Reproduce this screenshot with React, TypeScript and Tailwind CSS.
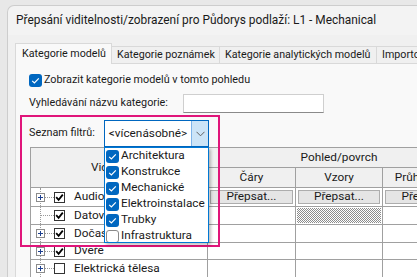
import React from "react";

function BlueCheck({ checked }: { checked: boolean }) {
  if (!checked)
    return <div className="w-[13px] h-[13px] rounded-[3px] border border-[#8a8a8a] bg-white shrink-0" />;
  return (
    <div className="w-[13px] h-[13px] rounded-[3px] bg-[#0067c0] shrink-0 flex items-center justify-center">
      <svg width="13" height="13" viewBox="0 0 13 13">
        <path d="M3.2 6.8 L5.4 9 L9.8 4.4" stroke="#ffffff" strokeWidth="1.2" fill="none" />
      </svg>
    </div>
  );
}

function ClassicCheck({ checked }: { checked: boolean }) {
  return (
    <div className="w-[11px] h-[11px] border border-[#333333] bg-white shrink-0 flex items-center justify-center">
      {checked && (
        <svg width="9" height="9" viewBox="0 0 9 9">
          <path d="M1.2 4.2 L3.6 6.8 L7.8 1.6" stroke="#000000" strokeWidth="1.8" fill="none" />
        </svg>
      )}
    </div>
  );
}

function Expander() {
  return (
    <div className="w-[9px] h-[9px] border border-[#8c8c8c] bg-white shrink-0 flex items-center justify-center z-10">
      <svg width="7" height="7" viewBox="0 0 7 7">
        <path d="M1 3.5 H6 M3.5 1 V6" stroke="#1c3f8f" strokeWidth="1" fill="none" />
      </svg>
    </div>
  );
}

const rows = [
  { name: "Audiovizuální zařízení", exp: true, checked: true, h: "h-[19px]", sel: true },
  { name: "Datová zařízení", exp: false, checked: true, h: "h-[18px]", hatch: true },
  { name: "Dočasné konstrukce", exp: true, checked: true, h: "h-[18px]" },
  { name: "Dveře", exp: true, checked: true, h: "h-[17px]" },
  { name: "Elektrická tělesa", exp: true, checked: false, h: "h-[18px]" },
];

const listItems = [
  ["Architektura", true],
  ["Konstrukce", true],
  ["Mechanické", true],
  ["Elektroinstalace", true],
  ["Trubky", true],
  ["Infrastruktura", false],
] as const;

function Btn() {
  return (
    <div className="h-full p-[2px]">
      <div className="h-full bg-[#e5e5e5] border border-[#adadad] flex items-center justify-center">
        Přepsat...
      </div>
    </div>
  );
}

export default function App() {
  return (
    <div className="relative w-[417px] h-[277px] overflow-hidden bg-[#e8e8e8] pt-[5px] pl-[7px] text-[#1a1a1a] font-['Roboto','Noto_Sans',sans-serif]">
      <div className="flex flex-col h-[272px] w-[410px] rounded-tl-[7px] border-l border-t border-[#cdcdcd] bg-[#f3f3f3] overflow-hidden">
        <div className="h-[29px] shrink-0 flex items-center pl-[8px] text-[11.9px] whitespace-nowrap">
          Přepsání viditelnosti/zobrazení pro Půdorys podlaží: L1 - Mechanical
        </div>
        <div className="flex-1 flex flex-col bg-[#f0f0f0] pl-[7px] pt-[8px] overflow-hidden">
          <div className="flex items-end h-[21px] shrink-0 text-[10.7px] whitespace-nowrap">
            <div className="h-[21px] w-[97px] shrink-0 border border-b-0 border-[#d9d9d9] bg-[#f9f9f9] pl-[6px] flex items-center overflow-hidden">
              Kategorie modelů
            </div>
            <div className="h-[18px] w-[108px] shrink-0 border-t border-r border-b border-[#d9d9d9] bg-[#f0f0f0] pl-[5px] flex items-center overflow-hidden">
              Kategorie poznámek
            </div>
            <div className="h-[18px] w-[157px] shrink-0 border-t border-r border-b border-[#d9d9d9] bg-[#f0f0f0] pl-[5px] flex items-center overflow-hidden">
              Kategorie analytických modelů
            </div>
            <div className="h-[18px] w-[80px] shrink-0 border-t border-r border-b border-[#d9d9d9] bg-[#f0f0f0] pl-[5px] flex items-center overflow-hidden">
              Importované kategorie
            </div>
          </div>
          <div className="flex-1 bg-[#f9f9f9] border-l border-[#d9d9d9] text-[10.8px] overflow-hidden">
            <div className="mt-[10px] h-[13px] pl-[13px] flex items-center gap-[2px] whitespace-nowrap">
              <BlueCheck checked />
              <span>Zobrazit kategorie modelů v tomto pohledu</span>
            </div>
            <div className="mt-[7px] h-[19px] pl-[13px] flex items-center whitespace-nowrap">
              <span className="w-[154px] shrink-0">Vyhledávání názvu kategorie:</span>
              <div className="w-[141px] h-[19px] bg-white border border-[#cfcfcf] border-b-[#8a8a8a]" />
            </div>
            <div className="mt-[7px] h-[27px] pl-[13px] flex items-center whitespace-nowrap">
              <span className="w-[75px] shrink-0">Seznam filtrů:</span>
              <div className="w-[105px] h-[27px] flex border border-[#0067c0] bg-white">
                <div className="flex-1 flex items-center justify-center text-[11.8px]">&lt;vícenásobné&gt;</div>
                <div className="w-[17px] bg-[#cce4f7] border-l border-[#7eb4ea] flex items-center justify-center">
                  <svg width="9" height="6" viewBox="0 0 9 6">
                    <path d="M0.5 0.8 L4.5 4.8 L8.5 0.8" stroke="#606060" strokeWidth="1" fill="none" />
                  </svg>
                </div>
              </div>
            </div>
            <div className="ml-[14px] w-max grid grid-cols-[177px_88px_87px_88px] border-l border-t border-[#a0a0a0] whitespace-nowrap text-[11.8px]">
              <div className="row-span-2 h-[40px] bg-[#f0f0f0] border-r border-b border-[#a0a0a0] flex items-center justify-center">
                Viditelnost
              </div>
              <div className="col-span-3 h-[20px] bg-[#f0f0f0] border-r border-b border-[#a0a0a0] flex items-center justify-center">
                Pohled/povrch
              </div>
              <div className="h-[20px] bg-[#f0f0f0] border-r border-b border-[#a0a0a0] flex items-center justify-center">Čáry</div>
              <div className="h-[20px] bg-[#f0f0f0] border-r border-b border-[#a0a0a0] flex items-center justify-center">Vzory</div>
              <div className="h-[20px] bg-[#f0f0f0] border-r border-b border-[#a0a0a0] flex items-center justify-center">Průhlednost</div>
              {rows.map((r, i) => (
                <React.Fragment key={i}>
                  <div className={`${r.h} relative bg-white border-r border-b border-[#a0a0a0] flex items-center pl-[5px]`}>
                    <div className="absolute left-[9px] top-0 bottom-0 border-l border-dotted border-[#9a9a9a]" />
                    {r.exp ? <Expander /> : <div className="w-[9px] shrink-0" />}
                    <div className={`w-[9px] border-t border-dotted border-[#9a9a9a] ${r.exp ? "" : "ml-[-5px] w-[14px]"}`} />
                    <ClassicCheck checked={r.checked} />
                    <span className="ml-[9px]">{r.name}</span>
                  </div>
                  <div className={`${r.h} bg-white border-r border-b border-[#a0a0a0]`}>{r.sel && <Btn />}</div>
                  <div className={`${r.h} bg-white border-r border-b border-[#a0a0a0]`}>
                    {r.sel && <Btn />}
                    {r.hatch && (
                      <div className="h-full p-[1px]">
                        <div className="h-full bg-[repeating-conic-gradient(#8c8c8c_0_25%,#ffffff_0_50%)] bg-[length:2px_2px]" />
                      </div>
                    )}
                  </div>
                  <div className={`${r.h} bg-white border-r border-b border-[#a0a0a0]`}>{r.sel && <Btn />}</div>
                </React.Fragment>
              ))}
            </div>
          </div>
        </div>
      </div>

      <div className="absolute left-[20px] top-[115px] w-[200px] h-[132px] border-2 border-[#e0157a] pointer-events-none" />

      <div className="absolute left-[104px] top-[147px] w-[105px] h-[96px] bg-white border border-[#0078d4] shadow-[2px_2px_3px_rgba(0,0,0,0.25)] pl-[1px] text-[11.8px] whitespace-nowrap overflow-hidden">
        {listItems.map(([t, c], i) => (
          <div key={i} className="h-[16px] flex items-center gap-[2px]">
            <BlueCheck checked={c} />
            <span>{t}</span>
          </div>
        ))}
      </div>
    </div>
  );
}
